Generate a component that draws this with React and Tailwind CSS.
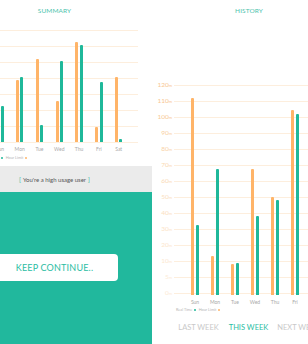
import React from 'react';

const TEAL = '#20b89c';

const summary = [
  { d: 'Sun', o: 50, t: 36 },
  { d: 'Mon', o: 62, t: 65 },
  { d: 'Tue', o: 83, t: 17 },
  { d: 'Wed', o: 41, t: 81 },
  { d: 'Thu', o: 100, t: 97 },
  { d: 'Fri', o: 15, t: 60 },
  { d: 'Sat', o: 65, t: 3 },
];

const history = [
  { d: 'Sun', o: 197, t: 70 },
  { d: 'Mon', o: 39, t: 126 },
  { d: 'Tue', o: 31, t: 32 },
  { d: 'Wed', o: 126, t: 79 },
  { d: 'Thu', o: 98, t: 95 },
  { d: 'Fri', o: 185, t: 181 },
  { d: 'Sat', o: 150, t: 120 },
];

const yLabels = [
  { v: '120', c: 'text-[#f8c690]' },
  { v: '110', c: 'text-[#f8c690]' },
  { v: '100', c: 'text-[#f8c994]' },
  { v: '90', c: 'text-[#f9d0a2]' },
  { v: '80', c: 'text-[#f9d3a8]' },
  { v: '70', c: 'text-[#fad8b1]' },
  { v: '60', c: 'text-[#fadab5]' },
  { v: '50', c: 'text-[#fbdebd]' },
  { v: '40', c: 'text-[#fbe0c1]' },
  { v: '30', c: 'text-[#fce4c8]' },
  { v: '20', c: 'text-[#fce6cc]' },
  { v: '10', c: 'text-[#fce8d0]' },
  { v: '5', c: 'text-[#fdebd6]' },
  { v: '0', c: 'text-[#fdebd6]' },
];

const Bars = ({ data, groupW }) => (
  <>
    {data.map((g) => (
      <div key={g.d} className={`flex flex-col items-center shrink-0 ${groupW}`}>
        <div className="flex items-end gap-[1.5px]">
          <div className="w-[3px] bg-[#ffb468] rounded-t-[1px]" style={{ height: g.o }} />
          <div className="w-[3px] bg-[#1fb89a] rounded-t-[1px]" style={{ height: g.t }} />
        </div>
        <span className="mt-[4.5px] text-[5px] leading-[5px] text-[#a9a9a9]">{g.d}</span>
      </div>
    ))}
  </>
);

const Legend = ({ pad }) => (
  <div className={`flex items-center h-[6px] gap-[1.5px] text-[3.8px] leading-none text-[#b5b5b5] ${pad}`}>
    <span>Real Time</span>
    <span className="w-[2.5px] h-[2.5px] rounded-full bg-[#1fb89a]" />
    <span className="ml-[1px]">Hour Limit</span>
    <span className="w-[2.5px] h-[2.5px] rounded-full bg-[#ffb468]" />
  </div>
);

export default function App() {
  return (
    <div
      className="w-[308px] h-[344px] overflow-hidden bg-white flex"
      style={{ fontFamily: 'Lato, "Open Sans", "Liberation Sans", sans-serif' }}
    >
      {/* Summary phone */}
      <div className="w-[195px] shrink-0 -ml-[43px] flex flex-col bg-white">
        <div className="h-[22px] flex items-center justify-center text-[6.5px] text-[#4cc3ad] tracking-[0.1px]">
          SUMMARY
        </div>

        <div className="relative h-[128px]">
          <div className="flex flex-col pl-[20px] pr-[14px]">
            {Array.from({ length: 8 }).map((_, i) => (
              <div key={i} className="h-[16px] flex items-center">
                <div className="flex-1 h-px bg-[#fdeedd]" />
              </div>
            ))}
          </div>
          <div className="absolute left-[33px] bottom-[-1.5px] flex items-end">
            <Bars data={summary} groupW="w-[19.8px]" />
          </div>
        </div>

        <div className="mt-[5px]">
          <Legend pad="pl-[26px]" />
        </div>

        <div className="mt-[5px] h-[26px] bg-[#ebebeb] flex items-center justify-center text-[6px] text-[#555]">
          <span className="text-[#2bbda3] mr-[2px]">[</span>
          You're a high usage user
          <span className="text-[#2bbda3] ml-[2px]">]</span>
        </div>

        <div className="h-[152px] bg-[#21b89d] flex flex-col items-center">
          <button className="mt-[62px] w-[127px] h-[27px] rounded-[4px] bg-white text-[9px] tracking-[0.2px] text-[#2bbda3] flex items-center justify-center">
            KEEP CONTINUE..
          </button>
        </div>
      </div>

      {/* History phone */}
      <div className="w-[190px] shrink-0 ml-[2px] flex flex-col bg-white">
        <div className="h-[22px] flex items-center justify-center text-[6.5px] text-[#4cc3ad] tracking-[0.1px]">
          HISTORY
        </div>

        <div className="relative mt-[55px] h-[224px]">
          <div className="flex flex-col">
            {yLabels.map((l) => (
              <div key={l.v} className="h-[16px] flex items-center">
                <span className={`w-[18px] text-right text-[6.5px] leading-none ${l.c}`}>
                  {l.v}
                  <span className="text-[4px]">m</span>
                </span>
                <div className="ml-[2px] flex-1 h-px bg-[#fdeedd]" />
              </div>
            ))}
          </div>
          <div className="absolute left-[31px] bottom-[-3.5px] flex items-end">
            <Bars data={history} groupW="w-[20px]" />
          </div>
        </div>

        <div className="mt-[6px]">
          <Legend pad="pl-[22px]" />
        </div>

        <div className="mt-[10px] ml-[19.5px] flex text-[7.5px] leading-[10px] whitespace-nowrap">
          <span className="w-[50px] text-center text-[#c9c9c9]">LAST WEEK</span>
          <span className="w-[50px] text-center text-[#2bbda3]">THIS WEEK</span>
          <span className="w-[50px] text-center text-[#c9c9c9]">NEXT WEEK</span>
        </div>
      </div>
    </div>
  );
}
